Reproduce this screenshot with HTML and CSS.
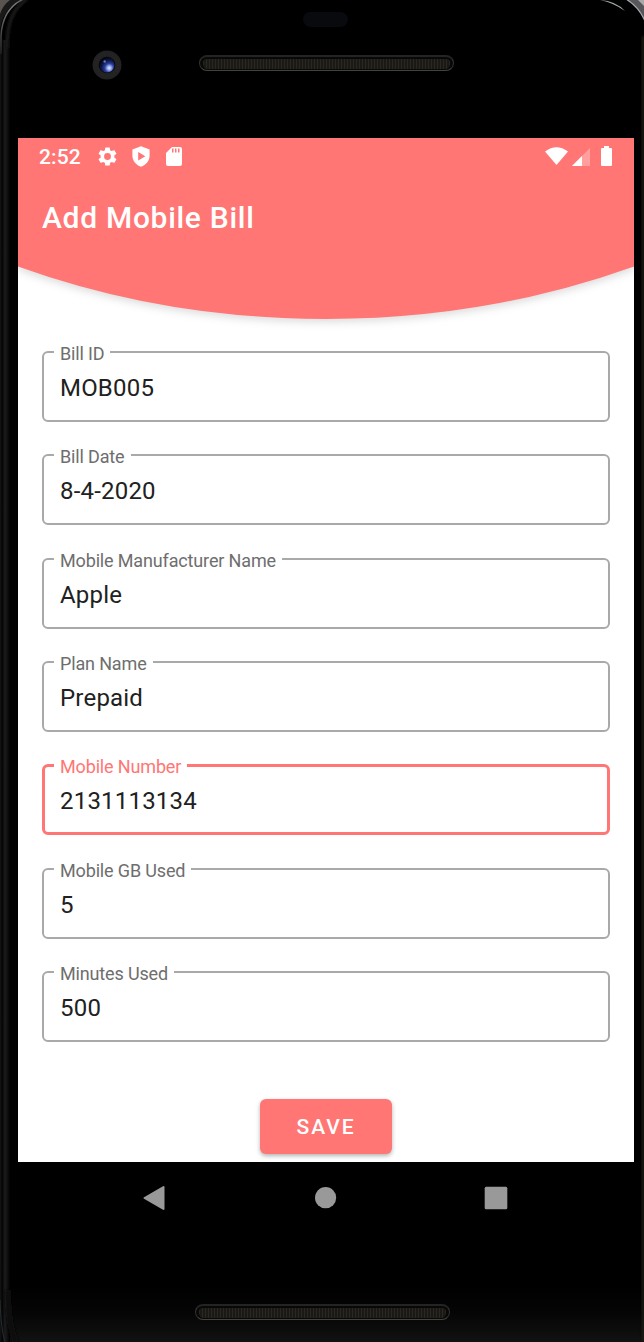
FILE: index.html
```html
<!DOCTYPE html>
<html lang="en">
<head>
<meta charset="utf-8">
<title>Add Mobile Bill</title>
<link rel="stylesheet" href="styles.css">
</head>
<body>
<div class="device">
  <svg class="frame" viewBox="0 0 644 1342" aria-hidden="true">
    <defs>
      <linearGradient id="bottom" x1="0" y1="0" x2="0" y2="1"><stop offset="0" stop-color="#000"/><stop offset=".5" stop-color="#050505"/><stop offset="1" stop-color="#121212"/></linearGradient>
      <linearGradient id="side" x1="0" y1="0" x2="1" y2="0"><stop offset="0" stop-color="#151515"/><stop offset=".13" stop-color="#0c0c0c"/><stop offset=".2" stop-color="#020202"/><stop offset=".5" stop-color="#1c1c1c"/><stop offset=".8" stop-color="#0c0c0c"/><stop offset="1" stop-color="#000"/></linearGradient>
      <linearGradient id="edge" x1="0" y1="0" x2="0" y2="1"><stop offset="0" stop-color="#888"/><stop offset=".5" stop-color="#555"/><stop offset="1" stop-color="#222"/></linearGradient>
      <filter id="soft"><feGaussianBlur stdDeviation="1.2"/></filter>
      <filter id="glow" filterUnits="userSpaceOnUse" x="-10" y="0" width="664" height="1342"><feGaussianBlur stdDeviation="1.2"/></filter>
    </defs>
    <rect y="1285" width="644" height="57" fill="url(#bottom)"/>
    <rect y="40" width="10" height="1302" fill="url(#side)"/>
    <path d="M0 0H20C8 7 0 18 0 34Z" fill="#191919"/>
    <path d="M0 0H10Q3 5 0 14Z" fill="#5a5450"/>
    <path d="M24-1C10 5 2 17 1 36V54" fill="none" stroke="url(#edge)" stroke-width="1.5"/>
    <path d="M27-1C14 8 7 20 7 48" fill="none" stroke="#151515" stroke-width="4" filter="url(#soft)"/>
    <path d="M600 0Q616 1 625 11Q614 3 600 0" fill="#a5abac"/>
    <path d="M626-1Q639 7 646 22V-1Z" fill="#57565a"/>
    <path d="M626-1Q639 7 645 21" fill="none" stroke="#aaa8ad" stroke-width="1.2"/>
    <path d="M638 0H644V6Z" fill="#aaa"/>
    <path d="M643 36V1342" stroke="#1b1a16" stroke-width="3" filter="url(#glow)"/>
    <path d="M0 1300Q1 1330 5 1342" fill="none" stroke="#252b2f" stroke-width="1.1"/>
    <path d="M8 1290Q8 1325 16 1342" fill="none" stroke="#101010" stroke-width="6" filter="url(#glow)"/>
  </svg>

  <header class="bezel-top">
    <span class="sensor"></span>
    <svg class="camera" viewBox="0 0 30 30" aria-hidden="true">
      <defs>
        <radialGradient id="lens" cx=".65" cy=".7" r=".7"><stop offset="0" stop-color="#e6ecff"/><stop offset=".2" stop-color="#94a8f0"/><stop offset=".42" stop-color="#2c409c"/><stop offset=".7" stop-color="#101a4c"/><stop offset="1" stop-color="#04071a"/></radialGradient>
      </defs>
      <circle cx="15" cy="15" r="14.5" fill="#222"/>
      <circle cx="15" cy="15" r="11" fill="none" stroke="#292626" stroke-width="3" stroke-dasharray="1 2"/>
      <circle cx="15" cy="15" r="8.3" fill="#07070c"/>
      <circle cx="15" cy="15" r="7.5" fill="url(#lens)"/>
      <circle cx="12.700" cy="11.500" r="1.200" fill="#6778be"/>
    </svg>
    <span class="speaker"></span>
  </header>

  <main class="screen">
    <svg class="wave" viewBox="0 0 616 200" aria-hidden="true"><path d="M-12 0H628V125Q616 128 616 128.500Q470 181 308 181Q146 181 0 128.500Q0 128-12 125Z"/></svg>
    <div class="status">
      <span class="time">2:52</span>
      <svg class="gear" viewBox="2 2 20 20"><path d="M19.140 12.940c.04-.3.060-.61.060-.94s-.02-.64-.07-.94l2.030-1.580c.18-.14.230-.41.120-.61l-1.920-3.320c-.12-.22-.37-.29-.59-.22l-2.390.96c-.5-.38-1.030-.7-1.620-.94l-.36-2.540A.48.48 0 0 0 13.920 2.400h-3.840a.48.48 0 0 0-.48.410l-.36 2.540c-.59.240-1.130.57-1.620.94l-2.390-.96c-.22-.08-.47 0-.59.220L2.720 8.870c-.12.210-.08.470.120.610l2.030 1.580c-.05.300-.09.630-.09.940s.02.640.07.940l-2.030 1.580c-.18.140-.23.410-.12.610l1.920 3.320c.12.220.37.290.59.220l2.390-.96c.5.380 1.030.7 1.620.94l.36 2.540c.05.240.24.410.48.410h3.840c.24 0 .44-.17.480-.41l.36-2.540c.59-.24 1.130-.56 1.620-.94l2.390.96c.22.080.47 0 .59-.22l1.920-3.320c.12-.22.070-.47-.12-.61zM12 15.600a3.600 3.600 0 1 1 0-7.200 3.600 3.600 0 0 1 0 7.200z"/></svg>
      <svg class="shield" viewBox="0 0 18 21"><path fill-rule="evenodd" d="M9 .3L17.600 3.500V9.500C17.600 15 14 19 9 20.700 4 19 .4 15 .4 9.500V3.500ZM6.200 6V14.500L13.300 10.200Z"/></svg>
      <svg class="card" viewBox="0 0 16 19"><path fill-rule="evenodd" d="M6 0H14Q16 0 16 2V17Q16 19 14 19H2Q0 19 0 17V6ZM6 1.500V5.500H7.500V1.500ZM9 1.500V5.500H10.500V1.500ZM12 1.500V5.500H13.500V1.500Z"/></svg>
      <span class="spacer"></span>
      <svg class="wifi" viewBox="0 0 23 18"><path d="M0 4.500Q11.500-4.200 23 4.500L11.500 18Z"/></svg>
      <svg class="signal" viewBox="0 0 18 18"><path opacity=".3" d="M18 0V18H0Z"/><path d="M10 8V18H0Z"/></svg>
      <svg class="battery" viewBox="0 0 11 20"><path d="M3 0H8V2H10Q11 2 11 3V19Q11 20 10 20H1Q0 20 0 19V3Q0 2 1 2H3Z"/></svg>
    </div>
    <h1 class="title">Add Mobile Bill</h1>
    <form class="form">
      <fieldset class="field"><legend>Bill ID</legend><span>MOB005</span></fieldset>
      <fieldset class="field"><legend>Bill Date</legend><span>8-4-2020</span></fieldset>
      <fieldset class="field"><legend>Mobile Manufacturer Name</legend><span>Apple</span></fieldset>
      <fieldset class="field"><legend>Plan Name</legend><span>Prepaid</span></fieldset>
      <fieldset class="field active"><legend>Mobile Number</legend><span>2131113134</span></fieldset>
      <fieldset class="field"><legend>Mobile GB Used</legend><span>5</span></fieldset>
      <fieldset class="field"><legend>Minutes Used</legend><span>500</span></fieldset>
    </form>
    <button class="save" type="button">SAVE</button>
  </main>

  <nav class="nav">
    <svg viewBox="0 0 24 26"><path d="M21.500 2V24L2.500 13Z" stroke="#999" stroke-width="2" stroke-linejoin="round"/></svg>
    <svg viewBox="0 0 24 26"><circle cx="12.600" cy="12.700" r="10.600"/></svg>
    <svg viewBox="0 0 24 26"><rect x=".7" y="1.700" width="22.600" height="22.600" rx="1.500"/></svg>
  </nav>
  <footer class="bezel-bottom"><span class="speaker"></span></footer>
</div>
</body>
</html>
```
FILE: styles.css
```css
* { box-sizing: border-box; }
body { margin: 0; background: #000; font-family: Roboto, "Liberation Sans", sans-serif; }
.device { position: relative; display: flex; flex-direction: column; width: 644px; height: 1342px; overflow: hidden; background: #000; }
.frame { position: absolute; inset: 0; width: 644px; height: 1342px; }

.bezel-top { position: relative; height: 138px; display: grid; grid-template-columns: 92px 30px 76px 256px; grid-template-rows: 50px 30px; flex: none; }
.sensor { grid-area: 1 / 4; width: 45px; height: 15px; margin: 12px 0 0 105px; border-radius: 8px; background: #090a0e; }
.camera { grid-area: 2 / 2; width: 30px; height: 30px; }
.bezel-top .speaker { grid-area: 2 / 4; margin: 5px 0 0 1px; }
.speaker { display: block; width: 255px; height: 16px; border: 1px solid #333; border-top: 2px solid #242424; border-bottom-color: #44443f; border-radius: 8px; background: repeating-linear-gradient(90deg, #2b2822 0 1px, #1a1916 1px 3px) content-box, #080808; padding: 2px 3px 1px; }

.screen { position: relative; width: 616px; height: 1024px; margin-left: 18px; flex: none; display: flex; flex-direction: column; overflow: hidden; background: #fff; }
.wave { position: absolute; top: 0; left: 0; width: 616px; height: 200px; fill: #ff7674; filter: drop-shadow(0 3px 4px rgba(0, 0, 0, .14)); }

.status { position: relative; display: flex; align-items: center; height: 37px; padding: 0 22px 0 21px; fill: #fff; color: #fff; flex: none; }
.time { width: 59px; font-size: 21px; font-weight: 500; line-height: 37px; letter-spacing: .1px; padding-top: 1px; }
.gear { width: 19px; height: 19px; margin-right: 1px; }
.shield { width: 18px; height: 21px; margin-left: 14px; }
.card { width: 16px; height: 19px; margin-left: 16px; }
.spacer { flex: 1; }
.wifi { width: 23px; height: 18px; margin: 0 4px 2px 0; }
.signal { width: 18px; height: 18px; margin: 0 11px 0 0; }
.battery { width: 11px; height: 20px; margin-bottom: 2px; }

.title { position: relative; margin: 22px 0 0 24px; height: 40px; font-size: 30px; font-weight: 500; line-height: 41px; letter-spacing: .7px; color: #fff; flex: none; }

.form { position: relative; display: flex; flex-direction: column; gap: 23.350px; margin: 105px 24px 0; }
.field { height: 80px; margin: 0; padding: 0 16px 0 10px; min-width: 0; border: 2px solid #a9a9a9; border-radius: 6px; color: #212121; flex: none; }
.field legend { height: 20px; padding: 0 6px; font-size: 18px; line-height: 23px; letter-spacing: -.15px; color: #6e6e6e; }
.field span { display: block; padding: 12px 0 0 6px; font-size: 24px; line-height: 28px; letter-spacing: .2px; }
.field.active { border-width: 3px; border-color: #ff7674; padding-left: 9px; }
.field.active legend { color: #ff7674; }

.save { position: relative; width: 132px; height: 55px; margin: 57px auto 0; padding: 0; border: 0; border-radius: 6px; background: #ff7674; color: #fff; font: 500 21px/57px Roboto, "Liberation Sans", sans-serif; letter-spacing: 1.900px; box-shadow: 0 2px 4px rgba(0, 0, 0, .3); flex: none; }

.nav { position: relative; display: flex; justify-content: space-between; padding: 23px 136px 0 142px; height: 142px; fill: #999; }
.nav svg { width: 24px; height: 26px; }
.bezel-bottom { position: relative; height: 38px; padding-left: 195px; }
```
